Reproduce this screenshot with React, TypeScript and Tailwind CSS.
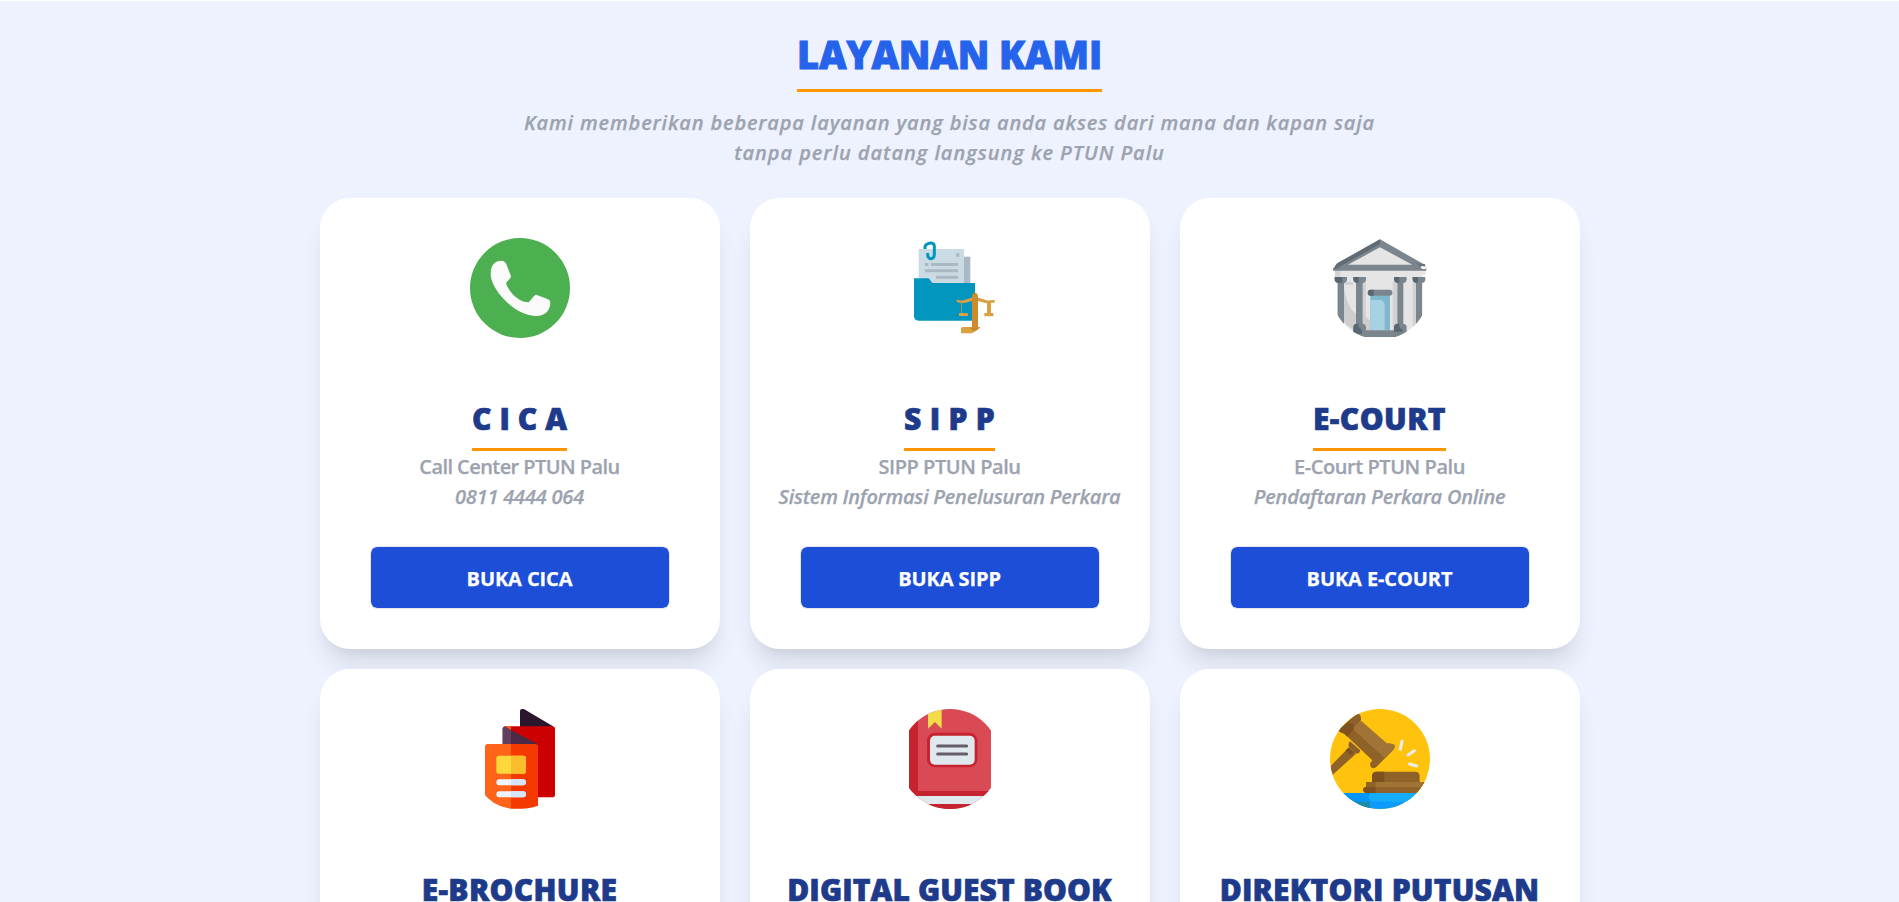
import type { ReactNode } from "react";

function PhoneIcon() {
  return (
    <svg viewBox="60 54 300 300" className="size-[100px]">
      <circle cx="210" cy="204" r="150" fill="#4caf50" />
      <path
        d="M154 122c8 0 12 4 15 11l13 33c2 5 0 8-4 12l-10 11c4 14 15 30 29 42 12 10 25 16 38 16 3-2 7-7 10-11 5-6 10-12 14-12l33 13c8 3 9 6 9 12-1 24-17 39-42 39-33 0-69-20-97-50-25-27-40-54-40-77 0-26 13-39 32-39z"
        fill="#fafafa"
      />
    </svg>
  );
}

function CaseFileIcon() {
  return (
    <svg viewBox="60 54 300 300" className="size-[100px]">
      <path d="M240 110h31v90h-31z" fill="#aab9c3" />
      <path d="M116 87h136v110H116z" fill="#cbdbe4" />
      <path d="M228 100h10v10h-10zM135 129h10v9h-10zM153 129h81v9h-81zM135 148h99v9h-99zM168 167h66v9h-66z" fill="#a9b8c2" />
      <path
        d="M135 87v-6c0-6 4-8 9-10 9-4 19-2 19 8v22c0 10-3 15-10 15s-10-5-10-13v-4"
        fill="none"
        stroke="#0295be"
        strokeWidth="9"
      />
      <path d="M102 175h42c7 0 8 14 16 14h125v113H116c-9 0-14-5-14-14z" fill="#0295be" />
      <path d="M276 322v-92c0-7 4-12 9-12s9 5 9 12v92z" fill="#cf8a2a" />
      <path
        d="M227 240h7c14 4 25-3 38-6 9-2 17-2 26 0 13 3 24 10 38 6h8v8h-11v31h7v10h-27v-10h8v-29c-12-2-21-7-32-8h-8c-11 1-20 6-35 8v29h12c3 0 7 2 7 9h-28v-9h7v-31h-9z"
        fill="#daa143"
      />
      <path d="M276 234h18v9h-18z" fill="#c98a2e" />
      <path d="M243 340v-13c0-5 3-6 8-6h50c-8 9-16 14-25 19z" fill="#daa143" />
      <path d="M271 322h30c-6 6-10 9-17 11-9-2-14-5-13-11z" fill="#c98a2e" />
    </svg>
  );
}

function CourthouseIcon() {
  return (
    <svg viewBox="60 54 300 300" className="size-[100px]">
      <defs>
        <clipPath id="court">
          <path d="M60 54h300v230h-22c-18 32-48 56-82 67h-92c-34-11-64-35-82-67H60z" />
        </clipPath>
      </defs>
      <g clipPath="url(#court)">
        <path d="M75 150h272v14h-9v187H82V164h-7z" fill="#e5e5e5" />
        <path d="M75 150h16v20H75zM103 186h27v8h-27zM157 186h11v144h-11zM248 186h13v144h-13zM308 186h10v144h-10z" fill="#d2d2d2" />
        <path d="M102 205c7 40 19 65 36 76v50c-15-6-28-16-36-26zM158 281c8 8 15 16 24 21v30h-24z" fill="#cdcdcd" />
        <path d="M210 70 95 139h232z" fill="#e5e5e5" />
        <path d="m210 58 134 76c4 3 2 4-8 5v7h13v6H69v-6c7-4 6-10 13-16zm0 24-96 52h193z" fill="#7a858e" fillRule="evenodd" />
        <path d="m210 58-128 72c-7 6-6 12-13 16h9l132-73z" fill="#5f6c75" />
        <path d="M316 130 335 139v8h14v-3l-5-12z" fill="#64717a" />
        <path d="M334 139h14v8h-11c-4-1-6-5-3-8z" fill="#fff" />
        <path d="M83 180h19v150H83zM138 180h20v150h-20zM262 180h18v150h-18zM318 180h18v150h-18z" fill="#7a858e" />
        <path d="M74 171h37v7c0 7-4 11-11 11H85c-7 0-11-4-11-11zM130 171h38v7c0 7-4 11-11 11h-16c-7 0-11-4-11-11zM252 171h38v7c0 7-4 11-11 11h-16c-7 0-11-4-11-11zM308 171h38v7c0 7-4 11-11 11h-16c-7 0-11-4-11-11z" fill="#7a858e" />
        <path d="M74 171h23v17H84c-7 0-10-4-10-10zM130 171h16v17h-5c-7 0-11-4-11-10zM252 171h16v17h-5c-7 0-11-4-11-10zM308 171h16v17h-5c-7 0-11-4-11-10z" fill="#596770" />
        <path d="M181 226h59v105h-59z" fill="#7fb8cd" />
        <path d="M181 240h28c9 0 15 7 15 15v76h-43z" fill="#a6d2e3" />
        <rect x="173" y="209" width="74" height="18" rx="8" fill="#7a858e" />
        <path d="M181 209h10v18h-10c-10 0-10-18 0-18z" fill="#596770" />
        <path d="M130 331v-9c0-7 4-11 11-11h16c7 0 11 4 11 11v9h84v-9c0-7 4-11 11-11h16c7 0 11 4 11 11v30H130z" fill="#7a858e" />
        <path d="M130 331v-9c0-7 4-11 11-11h5v9l10 11v10h-26zM252 331v-9c0-7 4-11 11-11h5v9l10 11v4h-26z" fill="#596770" />
      </g>
    </svg>
  );
}

function BrochureIcon() {
  return (
    <svg viewBox="60 57 300 300" className="size-[100px]">
      <path d="M210 112V64c0-7 7-9 13-6l86 51v6z" fill="#2c162c" />
      <path d="M163 109h144c5 0 8 3 8 8v197c0 5-3 8-8 8H200V170z" fill="#cc0000" />
      <path d="M163 109h20v16h-14z" fill="#ff5a16" />
      <path d="M158 166v-49c0-6 5-8 10-5l96 51v4z" fill="#4c2945" />
      <path d="M158 166v-49c0-6 5-8 10-5l15 8v46z" fill="#633f5d" />
      <path d="M183 162h73c5 0 8 3 8 8v177c-24 8-52 11-81 9z" fill="#f43a00" />
      <path d="M113 162h70v194c-32-4-58-18-78-41V170c0-5 3-8 8-8z" fill="#ff641a" />
      <rect x="139" y="197" width="89" height="54" rx="8" fill="#ffd93b" />
      <path d="M183 197h37c5 0 8 3 8 8v38c0 5-3 8-8 8h-37z" fill="#fabd2c" />
      <rect x="139" y="268" width="89" height="18" rx="9" fill="#edf3ff" />
      <rect x="139" y="304" width="89" height="18" rx="9" fill="#edf3ff" />
      <path d="M183 268h36c12 0 12 18 0 18h-36zM183 304h36c12 0 12 18 0 18h-36z" fill="#d6e5fb" />
    </svg>
  );
}

function GuestBookIcon() {
  return (
    <svg viewBox="60 57 300 300" className="size-[100px]">
      <defs>
        <clipPath id="book">
          <circle cx="210" cy="207" r="150" />
        </clipPath>
      </defs>
      <g clipPath="url(#book)">
        <path d="M87 57h246v300H87z" fill="#da4a54" />
        <path d="M87 57h27v246h219v15H87z" fill="#c5232f" />
        <path d="M87 318h246v24H87z" fill="#dfe9ed" />
        <path d="M87 342h246v15H87z" fill="#c5232f" />
        <path d="M144 50h41v66l-20-20-21 20z" fill="#f4dc49" />
        <rect x="141" y="128" width="151" height="104" rx="24" fill="#c5232f" />
        <rect x="150" y="137" width="134" height="87" rx="15" fill="#dfe9ed" />
        <path d="M173 168h87M173 192h87" stroke="#665d68" strokeWidth="9" strokeLinecap="round" />
      </g>
    </svg>
  );
}

function GavelIcon() {
  return (
    <svg viewBox="60 57 300 300" className="size-[100px]">
      <defs>
        <clipPath id="gavel">
          <circle cx="210" cy="207" r="150" />
        </clipPath>
      </defs>
      <g clipPath="url(#gavel)">
        <path d="M60 57h300v300H60z" fill="#ffc30d" />
        <path d="M60 309h300v48H60z" fill="#0b9bfa" />
        <path d="M360 309v26H186c-13-9-13-18-4-26z" fill="#14adff" />
        <path d="M60 309h122c-9 8-9 17 0 26H60z" fill="#0695fa" />
        <path d="M120 335h60c-3 10 0 16 4 22h-64z" fill="#198ba6" />
        <path d="m117 172 21 19-78 71v-32z" fill="#8f6227" />
        <path d="m117 172 14 14-10 10-15-14z" fill="#7d5120" />
        <path d="m120 154 30 26c2 7-7 14-14 9l-19-18c-2-6-2-12 3-17z" fill="#8b602d" />
        <path d="M140 88 232 168 190 214 100 128z" fill="#8f6227" />
        <path d="m137 95 17-2 80 70-25 27-78-70z" fill="#a07434" />
        <path d="m115 101 17 16-20 23-15-14z" fill="#7d5120" />
        <path d="m84 121 58-52c7 2 12 9 11 22l-46 40c-9 0-17-4-23-10z" fill="#8b602d" />
        <path d="m84 121 32-25 18 12-27 23c-9 0-17-4-23-10z" fill="#7d5120" />
        <path d="m181 218 53-58 17 3c5 5 3 11-1 16l-52 53c-9 6-20 1-17-14z" fill="#8f6227" />
        <path d="m207 187 27-27 17 3c5 5 3 11-1 16l-26 27z" fill="#a07434" />
        <path d="M199 245h117c8 0 13 5 13 13v20H186v-20c0-8 5-13 13-13z" fill="#8f6227" />
        <path d="M199 245h24v33h-37v-20c0-8 5-13 13-13z" fill="#7d5120" />
        <path d="M168 276h192v33H170c-13 0-14-17-2-18z" fill="#8f6227" />
        <path d="M197 276h163v15H197z" fill="#a07434" />
        <path d="M168 291h29v18h-27c-13 0-14-17-2-18z" fill="#7d5120" />
        <path d="m276 154-5 24M313 182l-19 13M299 222l21 6" stroke="#e9edf0" strokeWidth="9" strokeLinecap="round" />
      </g>
    </svg>
  );
}

type Service = {
  title: string;
  titleClass: string;
  icon: ReactNode;
  about?: string;
  aboutClass?: string;
  note?: string;
  noteClass?: string;
  action?: string;
};

const services: Service[] = [
  {
    title: "C I C A",
    titleClass: "tracking-[0.07px]",
    about: "Call Center PTUN Palu",
    aboutClass: "tracking-[-0.57px]",
    note: "0811 4444 064",
    noteClass: "tracking-[-0.2px]",
    action: "BUKA CICA",
    icon: <PhoneIcon />,
  },
  {
    title: "S I P P",
    titleClass: "tracking-[0.27px]",
    about: "SIPP PTUN Palu",
    aboutClass: "tracking-[-0.45px]",
    note: "Sistem Informasi Penelusuran Perkara",
    noteClass: "tracking-[-0.26px]",
    action: "BUKA SIPP",
    icon: <CaseFileIcon />,
  },
  {
    title: "E-COURT",
    titleClass: "tracking-[0.41px]",
    about: "E-Court PTUN Palu",
    aboutClass: "tracking-[-0.43px]",
    note: "Pendaftaran Perkara Online",
    noteClass: "tracking-[-0.22px]",
    action: "BUKA E-COURT",
    icon: <CourthouseIcon />,
  },
  { title: "E-BROCHURE", titleClass: "tracking-[0.33px]", icon: <BrochureIcon /> },
  { title: "DIGITAL GUEST BOOK", titleClass: "tracking-[0.1px]", icon: <GuestBookIcon /> },
  { title: "DIREKTORI PUTUSAN", titleClass: "tracking-[0.2px]", icon: <GavelIcon /> },
];

function ServiceCard({ service }: { service: Service }) {
  return (
    <article className="flex h-[451px] flex-col items-center rounded-[30px] bg-white pt-10 shadow-[0_20px_25px_-5px_rgba(0,0,0,0.1),0_10px_10px_-5px_rgba(0,0,0,0.04)]">
      {service.icon}
      <h3
        className={`mt-[58px] border-b-[3px] border-[#ff9500] pb-[7px] text-[30px] leading-[45px] font-black whitespace-nowrap text-[#1e3a8a] [-webkit-text-stroke:0.7px_currentColor] ${service.titleClass}`}
      >
        {service.title}
      </h3>
      {service.action && (
        <>
          <p
            className={`mt-px text-[20px] leading-[30px] font-semibold whitespace-nowrap text-[#9ca3af] [-webkit-text-stroke:0.25px_currentColor] ${service.aboutClass}`}
          >
            {service.about}
          </p>
          <p
            className={`text-[20px] leading-[30px] font-semibold whitespace-nowrap text-[#9ca3af] italic [-webkit-text-stroke:0.25px_currentColor] ${service.noteClass}`}
          >
            {service.note}
          </p>
          <a
            href="#"
            className="mt-[34px] flex h-[63px] w-[300px] items-center justify-center rounded-[7px] border border-gray-200 bg-[#1d4ed8] bg-clip-padding pt-0.5 text-[20px] leading-[30px] font-bold tracking-[-0.1px] text-white [-webkit-text-stroke:0.25px_currentColor]"
          >
            {service.action}
          </a>
        </>
      )}
    </article>
  );
}

export default function App() {
  return (
    <main className="h-[902px] overflow-hidden border-t border-white bg-[#eef2ff] font-['Open_Sans','Noto_Sans',sans-serif]">
      <header className="flex flex-col items-center pt-[23px] text-center">
        <h2 className="border-b-[3px] border-[#ff9500] pb-[5px] text-[38px] leading-[60px] font-black tracking-[-0.17px] whitespace-nowrap text-[#2563eb] [-webkit-text-stroke:0.9px_currentColor]">
          LAYANAN KAMI
        </h2>
        <p className="mt-4 text-[20px] leading-[30px] font-semibold whitespace-nowrap text-[#9ca3af] italic [-webkit-text-stroke:0.25px_currentColor]">
          <span className="block tracking-[0.84px]">
            Kami memberikan beberapa layanan yang bisa anda akses dari mana dan kapan saja
          </span>
          <span className="block tracking-[0.95px]">tanpa perlu datang langsung ke PTUN Palu</span>
        </p>
      </header>
      <section className="mx-auto mt-[30px] grid w-[1260px] grid-cols-3 gap-x-[30px] gap-y-5">
        {services.map((service) => (
          <ServiceCard key={service.title} service={service} />
        ))}
      </section>
    </main>
  );
}
